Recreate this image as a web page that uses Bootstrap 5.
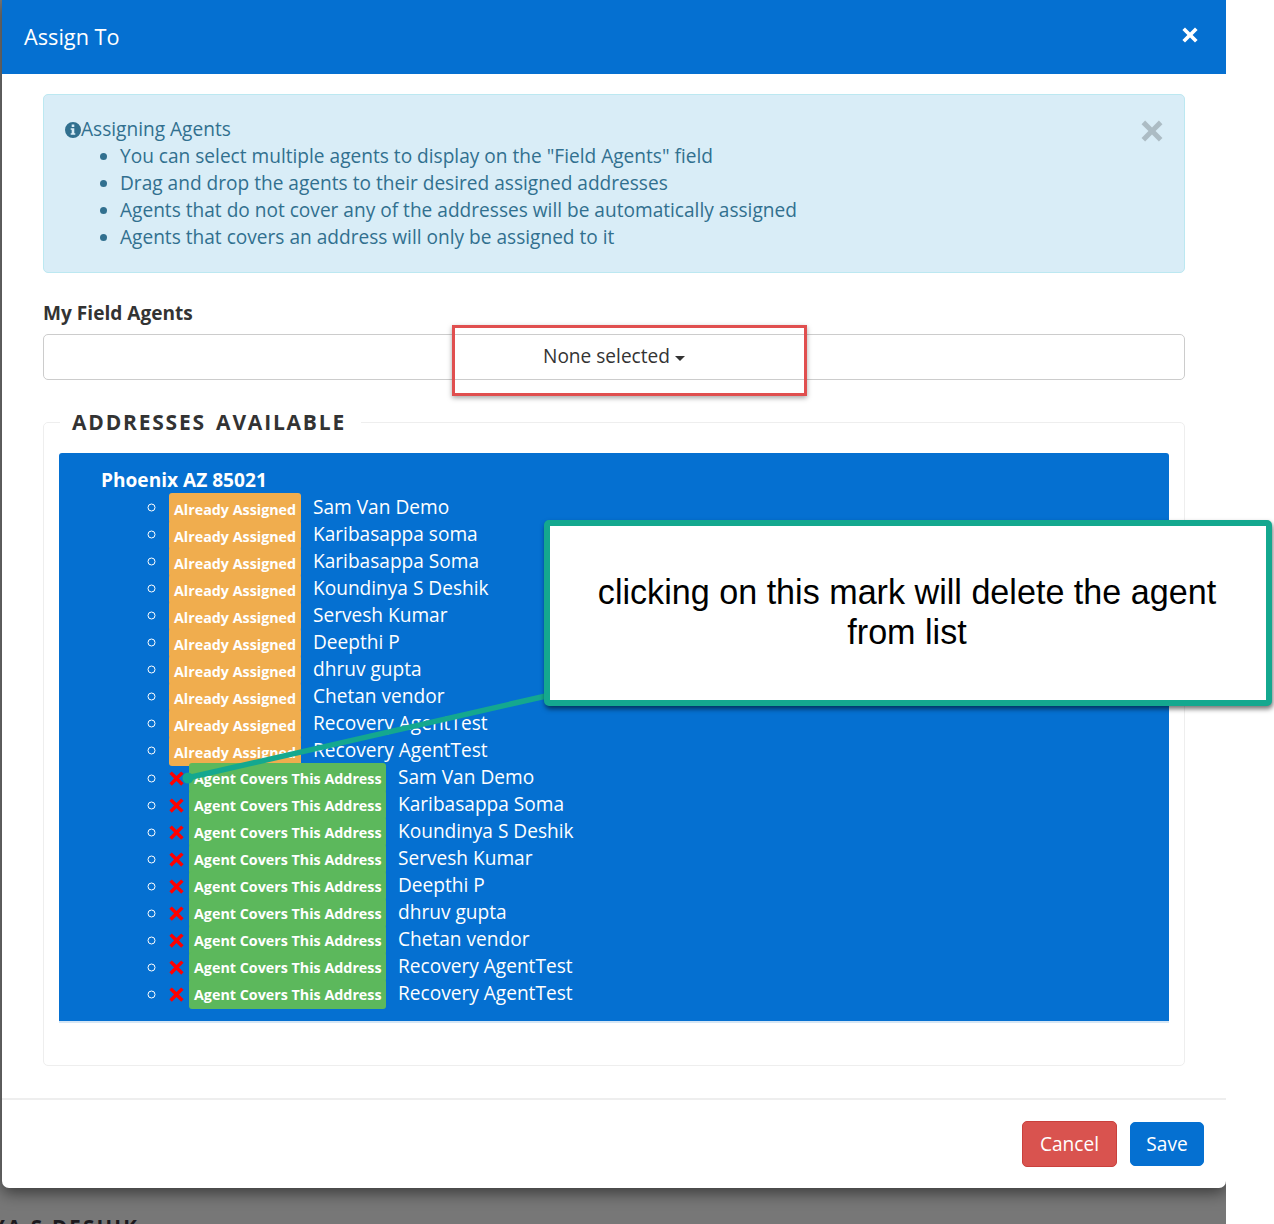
<!DOCTYPE html>
<html lang="en">
<head>
<meta charset="utf-8">
<title>Assign To</title>
<link href="https://cdn.jsdelivr.net/npm/bootstrap@5.3.0/dist/css/bootstrap.min.css" rel="stylesheet">
<style>
html,body{margin:0;height:1224px;overflow:hidden;background:#fff;font-family:"Open Sans",sans-serif;}
.shade{width:1226px;height:1224px;background:#777;padding-left:2px;position:relative;overflow:hidden;}
.dialog{width:1224px;background:#fff;border:0;border-radius:0 0 7px 7px;box-shadow:0 5px 15px rgba(0,0,0,.5);position:relative;z-index:1;}
.dialog .modal-header{height:74px;padding:0 28px 4px 22px;background:#0570d1;color:#fff;border:0;border-radius:0;display:flex;justify-content:space-between;align-items:center;}
.dialog .modal-title{font-size:21.7px;line-height:30px;margin-top:4px;font-weight:400;}
.dialog .modal-body{padding:20px 41px 32px;}
.note{background:#d9edf7;border:1px solid #bce8f1;color:#31708f;border-radius:5px;padding:21px;margin:0 0 27px;font-size:19.1px;line-height:27px;display:flex;justify-content:space-between;}
.note ul{margin:0;padding-left:55px;}
.note-x{margin:4px 0 0 0;}
.info-ico{vertical-align:-2px;}
.field-label{font-size:19.1px;font-weight:700;line-height:27px;margin:0 0 7px;color:#333;display:block;}
.picker{display:block;width:100%;height:46px;background:#fff;border:1px solid #ccc;border-radius:5px;font-size:19.1px;line-height:26px;color:#333;padding:0 0 2px;}
.picker.dropdown-toggle::after{border-top-width:5px;border-left-width:5.5px;border-right-width:5.5px;margin-left:5px;vertical-align:2px;}
.addr-box{margin:27px 0 0;border:1px solid #eee;border-radius:5px;padding:0 15px 42px;}
.addr-box legend{float:none;width:auto;margin:0 0 16px 1px;padding:0 15px 0 12px;font-size:21px;line-height:30px;font-weight:700;letter-spacing:1.8px;word-spacing:3px;color:#333;}
.panel-blue{background:#0570d1;color:#fff;border-bottom:2px solid #d5e6f5;border-radius:3px 3px 0 0;height:570px;padding:14px 42px 0;}
.city{font-size:19.1px;font-weight:700;line-height:27px;}
.agents{list-style:circle;margin:0;padding:0 0 0 68px;font-size:19.1px;line-height:27px;}
.agents li{height:27px;}
.agents li::marker{font-size:20px;}
.rowline{display:flex;align-items:flex-start;}
.tag{display:block;height:30px;padding:0 5px;border-radius:3px;font-size:14.3px;font-weight:700;color:#fff;position:relative;white-space:nowrap;}
.tag-old{background:#f0ad4e;width:132px;margin-top:-4px;line-height:34px;}
.tag-cov{background:#5cb85c;width:197px;margin-left:5px;margin-top:-1px;line-height:32px;}
.del-ico{flex:0 0 15px;margin:7px 0 0 0;}
.who{margin:-3px 0 0 12px;white-space:nowrap;}
.tag-cov + .who{margin-top:0;}
.dialog .modal-footer{height:90px;border-top:2px solid #eee;border-radius:0;padding:21px 22px 0 0;display:flex;justify-content:flex-end;align-items:flex-start;gap:13px;}
.dialog .modal-footer .btn{margin:0;font-size:19.1px;line-height:28px;color:#fff;border-radius:5px;}
.btn-cancel{background:#d9534f;border:1px solid #c9403c;height:46px;width:95px;padding:0;}
.btn-keep{background:#0570d1;border:1px solid #0570d1;height:44px;width:74px;padding:0;margin-top:1px!important;}
.under{font-size:20.5px;font-weight:700;letter-spacing:2.2px;color:#1d1a1f;line-height:30px;margin:24px 0 0 -10px;white-space:nowrap;}
.redbox{position:absolute;left:452px;top:325px;width:355px;height:71px;border:3px solid #e04f4f;box-shadow:0 2px 5px rgba(0,0,0,.35);z-index:3;}
.callout{position:absolute;left:544px;top:520px;width:728px;height:186px;background:#fff;border:6px solid #14a88f;border-radius:5px;box-shadow:1px 3px 5px rgba(0,0,0,.55);z-index:5;display:flex;align-items:center;justify-content:center;text-align:center;padding:0 22px 2px 20px;color:#000;font-family:"Liberation Sans",Arial,sans-serif;font-size:35px;line-height:40px;}
.callout-text{display:block;transform:scaleX(.975);}
.arrow{position:absolute;left:0;top:0;z-index:4;pointer-events:none;}
</style>
</head>
<body>
<div class="shade">
  <div class="modal-content dialog">
    <div class="modal-header">
      <h5 class="modal-title">Assign To</h5>
      <svg width="16" height="16" viewBox="0 0 16 16" role="img" aria-label="Close"><path fill="#fff" d="M3 .4 8 5.400 13 .4l2.600 2.600L10.600 8l5 5-2.600 2.600L8 10.600l-5 5L.4 13l5-5-5-5z"/></svg>
    </div>
    <div class="modal-body">
      <div class="note" role="alert">
        <div>
          <svg class="info-ico" width="16" height="16" viewBox="0 0 16 16"><path fill="#31708f" fill-rule="evenodd" d="M8 0a8 8 0 1 1 0 16A8 8 0 0 1 8 0zM6.700 2.600v2.500h2.600V2.600zM5.700 6.300v1.500h1v3.400h-1v1.600h4.600v-1.600h-1V6.300z"/></svg>Assigning Agents
          <ul>
            <li>You can select multiple agents to display on the "Field Agents" field</li>
            <li>Drag and drop the agents to their desired assigned addresses</li>
            <li>Agents that do not cover any of the addresses will be automatically assigned</li>
            <li>Agents that covers an address will only be assigned to it</li>
          </ul>
        </div>
        <svg class="note-x" width="22" height="22" viewBox="0 0 16 16" opacity=".2"><path fill="#000" d="M3 .4 8 5.400 13 .4l2.600 2.600L10.600 8l5 5-2.600 2.600L8 10.600l-5 5L.4 13l5-5-5-5z"/></svg>
      </div>
      <label class="field-label">My Field Agents</label>
      <button type="button" class="btn picker dropdown-toggle">None selected</button>
      <fieldset class="addr-box">
        <legend>ADDRESSES AVAILABLE</legend>
        <div class="panel-blue">
          <div class="city">Phoenix AZ 85021</div>
          <ul class="agents">
            <li><div class="rowline"><span class="tag tag-old">Already Assigned</span><span class="who">Sam Van Demo</span></div></li>
            <li><div class="rowline"><span class="tag tag-old">Already Assigned</span><span class="who">Karibasappa soma</span></div></li>
            <li><div class="rowline"><span class="tag tag-old">Already Assigned</span><span class="who">Karibasappa Soma</span></div></li>
            <li><div class="rowline"><span class="tag tag-old">Already Assigned</span><span class="who">Koundinya S Deshik</span></div></li>
            <li><div class="rowline"><span class="tag tag-old">Already Assigned</span><span class="who">Servesh Kumar</span></div></li>
            <li><div class="rowline"><span class="tag tag-old">Already Assigned</span><span class="who">Deepthi P</span></div></li>
            <li><div class="rowline"><span class="tag tag-old">Already Assigned</span><span class="who">dhruv gupta</span></div></li>
            <li><div class="rowline"><span class="tag tag-old">Already Assigned</span><span class="who">Chetan vendor</span></div></li>
            <li><div class="rowline"><span class="tag tag-old">Already Assigned</span><span class="who">Recovery AgentTest</span></div></li>
            <li><div class="rowline"><span class="tag tag-old">Already Assigned</span><span class="who">Recovery AgentTest</span></div></li>
            <li><div class="rowline"><svg class="del-ico" width="15" height="15" viewBox="0 0 16 16"><path fill="#f00" d="M3 .4 8 5.400 13 .4l2.600 2.600L10.600 8l5 5-2.600 2.600L8 10.600l-5 5L.4 13l5-5-5-5z"/></svg><span class="tag tag-cov">Agent Covers This Address</span><span class="who">Sam Van Demo</span></div></li>
            <li><div class="rowline"><svg class="del-ico" width="15" height="15" viewBox="0 0 16 16"><path fill="#f00" d="M3 .4 8 5.400 13 .4l2.600 2.600L10.600 8l5 5-2.600 2.600L8 10.600l-5 5L.4 13l5-5-5-5z"/></svg><span class="tag tag-cov">Agent Covers This Address</span><span class="who">Karibasappa Soma</span></div></li>
            <li><div class="rowline"><svg class="del-ico" width="15" height="15" viewBox="0 0 16 16"><path fill="#f00" d="M3 .4 8 5.400 13 .4l2.600 2.600L10.600 8l5 5-2.600 2.600L8 10.600l-5 5L.4 13l5-5-5-5z"/></svg><span class="tag tag-cov">Agent Covers This Address</span><span class="who">Koundinya S Deshik</span></div></li>
            <li><div class="rowline"><svg class="del-ico" width="15" height="15" viewBox="0 0 16 16"><path fill="#f00" d="M3 .4 8 5.400 13 .4l2.600 2.600L10.600 8l5 5-2.600 2.600L8 10.600l-5 5L.4 13l5-5-5-5z"/></svg><span class="tag tag-cov">Agent Covers This Address</span><span class="who">Servesh Kumar</span></div></li>
            <li><div class="rowline"><svg class="del-ico" width="15" height="15" viewBox="0 0 16 16"><path fill="#f00" d="M3 .4 8 5.400 13 .4l2.600 2.600L10.600 8l5 5-2.600 2.600L8 10.600l-5 5L.4 13l5-5-5-5z"/></svg><span class="tag tag-cov">Agent Covers This Address</span><span class="who">Deepthi P</span></div></li>
            <li><div class="rowline"><svg class="del-ico" width="15" height="15" viewBox="0 0 16 16"><path fill="#f00" d="M3 .4 8 5.400 13 .4l2.600 2.600L10.600 8l5 5-2.600 2.600L8 10.600l-5 5L.4 13l5-5-5-5z"/></svg><span class="tag tag-cov">Agent Covers This Address</span><span class="who">dhruv gupta</span></div></li>
            <li><div class="rowline"><svg class="del-ico" width="15" height="15" viewBox="0 0 16 16"><path fill="#f00" d="M3 .4 8 5.400 13 .4l2.600 2.600L10.600 8l5 5-2.600 2.600L8 10.600l-5 5L.4 13l5-5-5-5z"/></svg><span class="tag tag-cov">Agent Covers This Address</span><span class="who">Chetan vendor</span></div></li>
            <li><div class="rowline"><svg class="del-ico" width="15" height="15" viewBox="0 0 16 16"><path fill="#f00" d="M3 .4 8 5.400 13 .4l2.600 2.600L10.600 8l5 5-2.600 2.600L8 10.600l-5 5L.4 13l5-5-5-5z"/></svg><span class="tag tag-cov">Agent Covers This Address</span><span class="who">Recovery AgentTest</span></div></li>
            <li><div class="rowline"><svg class="del-ico" width="15" height="15" viewBox="0 0 16 16"><path fill="#f00" d="M3 .4 8 5.400 13 .4l2.600 2.600L10.600 8l5 5-2.600 2.600L8 10.600l-5 5L.4 13l5-5-5-5z"/></svg><span class="tag tag-cov">Agent Covers This Address</span><span class="who">Recovery AgentTest</span></div></li>
          </ul>
        </div>
      </fieldset>
    </div>
    <div class="modal-footer">
      <button type="button" class="btn btn-cancel">Cancel</button>
      <button type="button" class="btn btn-keep">Save</button>
    </div>
  </div>
  <div class="under">YA S DESHIK</div>
</div>
<div class="redbox"></div>
<svg class="arrow" width="1274" height="1224" viewBox="0 0 1274 1224"><line x1="187" y1="778" x2="546" y2="696" stroke="#14a88f" stroke-width="5.500"/><circle cx="188" cy="778" r="5.500" fill="#14a88f"/></svg>
<div class="callout"><span class="callout-text">clicking on this mark will delete the agent from list</span></div>
<script src="https://cdn.jsdelivr.net/npm/bootstrap@5.3.0/dist/js/bootstrap.bundle.min.js"></script>
</body>
</html>
